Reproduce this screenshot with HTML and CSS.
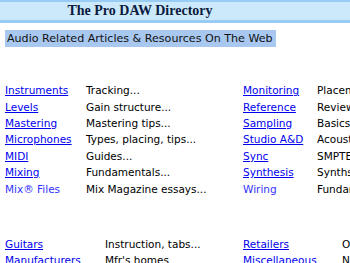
FILE: index.html
```html
<!DOCTYPE html>
<html lang="en">
<head>
  <meta charset="UTF-8">
  <title>The Pro DAW Directory</title>
  <link rel="stylesheet" href="styles.css">
</head>
<body>
  <div class="masthead">
    <h1>The Pro DAW Directory</h1>
  </div>

  <p class="tagline"><span>Audio Related Articles &amp; Resources On The Web</span></p>

  <div class="dir dir-main">
    <a href="#">Instruments</a><span>Tracking...</span><a href="#">Monitoring</a><span>Placement...</span>
    <a href="#">Levels</a><span>Gain structure...</span><a href="#">Reference</a><span>Reviews...</span>
    <a href="#">Mastering</a><span>Mastering tips...</span><a href="#">Sampling</a><span>Basics...</span>
    <a href="#">Microphones</a><span>Types, placing, tips...</span><a href="#">Studio A&amp;D</a><span>Acoustics...</span>
    <a href="#">MIDI</a><span>Guides...</span><a href="#">Sync</a><span>SMPTE...</span>
    <a href="#">Mixing</a><span>Fundamentals...</span><a href="#">Synthesis</a><span>Synths...</span>
    <a href="#" class="visited">Mix&reg; Files</a><span>Mix Magazine essays...</span><a href="#" class="visited">Wiring</a><span>Fundamentals...</span>
  </div>

  <div class="dir dir-more">
    <a href="#">Guitars</a><span>Instruction, tabs...</span><a href="#">Retailers</a><span>Online...</span>
    <a href="#">Manufacturers</a><span>Mfr's homes</span><a href="#">Miscellaneous</a><span>News...</span>
  </div>
</body>
</html>
```

FILE: styles.css
```css
body {
  margin: 0;
  font-family: "DejaVu Sans", Verdana, sans-serif;
  font-size: 10.5px;
  color: #000;
  background-color: #fff;
  overflow: hidden;
}

.masthead {
  background-color: #cce9fb;
  border-top: 2px solid #99ccf5;
  border-bottom: 3px solid #99ccf5;
  height: 18px;
}

h1 {
  width: 280px;
  margin: 0;
  text-align: center;
  font-family: "Liberation Serif", "Times New Roman", serif;
  font-size: 14px;
  font-weight: bold;
  line-height: 18px;
  color: #0b1a40;
}

.tagline {
  margin: 7px 0 0 5px;
  font-size: 11.1px;
  line-height: 17px;
}

.tagline span {
  display: inline-block;
  padding: 0 3px 0 2px;
  background-color: #a8c8f0;
  color: #111;
}

.dir {
  display: grid;
  grid-auto-rows: 16.4px;
  align-items: center;
  white-space: nowrap;
  padding-left: 5px;
  line-height: 14px;
}

.dir-main {
  margin-top: 35px;
  grid-template-columns: 81px 157px 74px 200px;
}

.dir-more {
  margin-top: 39px;
  grid-template-columns: 100px 138px 99px 200px;
}

.dir a {
  color: #0000ee;
  justify-self: start;
}

.dir a.visited {
  color: #3333ff;
  text-decoration: none;
}
```
